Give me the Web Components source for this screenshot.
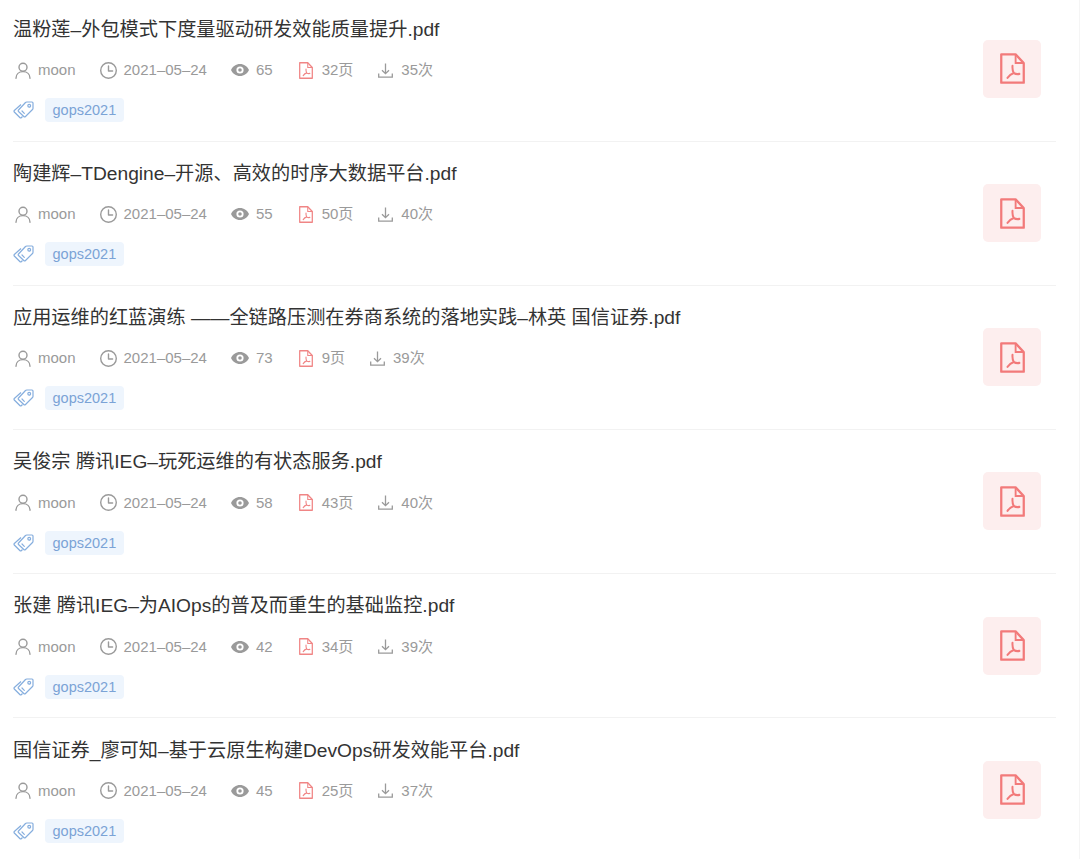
<!DOCTYPE html>
<html><head><meta charset="utf-8"><style>
html,body{margin:0;padding:0;background:#fff;overflow:hidden}
body{font-family:"Liberation Sans","Noto Sans CJK SC",sans-serif;height:859px;width:1079px;border-right:1px solid #f5f5f5}
doc-list{margin:-2.700px 0 0 13px;width:1043px}
</style></head><body>
<doc-list>
<doc-row name="温粉莲–外包模式下度量驱动研发效能质量提升.pdf" views="65" pages="32页" downloads="35次"></doc-row>
<doc-row name="陶建辉–TDengine–开源、高效的时序大数据平台.pdf" views="55" pages="50页" downloads="40次"></doc-row>
<doc-row name="应用运维的红蓝演练 ——全链路压测在券商系统的落地实践–林英 国信证券.pdf" views="73" pages="9页" downloads="39次"></doc-row>
<doc-row name="吴俊宗 腾讯IEG–玩死运维的有状态服务.pdf" views="58" pages="43页" downloads="40次"></doc-row>
<doc-row name="张建 腾讯IEG–为AIOps的普及而重生的基础监控.pdf" views="42" pages="34页" downloads="39次"></doc-row>
<doc-row name="国信证券_廖可知–基于云原生构建DevOps研发效能平台.pdf" views="45" pages="25页" downloads="37次"></doc-row>
</doc-list>
<script>
const PDF=`<path d="M1 1H12.5L19 7.5V22H1Z" fill="none" stroke="currentColor" stroke-width="1.8" stroke-linejoin="round"/><path d="M12.5 1V7.5H19" fill="none" stroke="currentColor" stroke-width="1.5"/><path d="M10 9.5C9.8 12 10.2 13.5 11 14.8M11 14.8C12.2 15.5 13.8 15.8 15.5 15.5M11 14.8C9.4 15.3 7.5 16.4 6 18.4" fill="none" stroke="currentColor" stroke-width="1.6" stroke-linecap="round"/>`;
const ICONS={
user:`<svg slot="icon" width="16" height="17" viewBox="0 0 16 17" fill="none" stroke="#9a9a9a" stroke-width="1.4"><circle cx="8" cy="5.2" r="4"/><path d="M1 16.2C1 12.2 4 9.600 8 9.600S15 12.2 15 16.2" stroke-linecap="round"/></svg>`,
clock:`<svg slot="icon" width="17" height="17" viewBox="0 0 17 17" fill="none" stroke="#9a9a9a" stroke-width="1.4"><circle cx="8.500" cy="8.500" r="7.800"/><path d="M8.500 4V9H12.600" stroke-linecap="round" stroke-linejoin="round"/></svg>`,
eye:`<svg slot="icon" width="18" height="12" viewBox="0 0 18 12"><path fill="#9a9a9a" fill-rule="evenodd" d="M9 0C13 0 16.400 2.500 18 6C16.400 9.500 13 12 9 12S1.600 9.500 0 6C1.600 2.500 5 0 9 0ZM9 2.400A3.600 3.600 0 1 0 9 9.600A3.600 3.600 0 1 0 9 2.400ZM9 4.200A1.800 1.800 0 1 1 9 7.800A1.800 1.800 0 1 1 9 4.200Z"/></svg>`,
pdf:`<svg slot="icon" width="14" height="17" viewBox="0 0 20 23" preserveAspectRatio="none" style="color:#f08585">${PDF}</svg>`,
down:`<svg slot="icon" width="15" height="15" viewBox="0 0 15 15" fill="none" stroke="#9a9a9a" stroke-width="1.3"><path d="M7.500 .5V10.500M4 7.200L7.500 10.700L11 7.200M.7 10.500V14.200H14.300V10.500"/></svg>`
};
class DocMeta extends HTMLElement{
 constructor(){super();this.attachShadow({mode:'open'}).innerHTML=`<style>:host{display:inline-flex;align-items:center;gap:var(--g,8px);font-size:15px;line-height:20px;color:#9a9a9a;white-space:nowrap}
 ::slotted(svg){display:block;flex:none}</style><slot name="icon"></slot><slot></slot>`}
}
customElements.define('doc-meta',DocMeta);
class DocTag extends HTMLElement{
 constructor(){super();this.attachShadow({mode:'open'}).innerHTML=`<style>:host{display:inline-block;height:24px;line-height:24px;padding:0 7.500px;border-radius:4px;background:#eef5fd;color:#7ba3d6;font-size:14.500px}</style><slot></slot>`}
}
customElements.define('doc-tag',DocTag);
class DocThumb extends HTMLElement{
 constructor(){super();this.attachShadow({mode:'open'}).innerHTML=`<style>:host{display:flex;align-items:center;justify-content:center;width:58px;height:58px;border-radius:5px;background:#fdeeee;color:#f27a7a}svg{display:block}</style>
 <svg width="25" height="31" viewBox="0 0 20 23" preserveAspectRatio="none">${PDF}</svg>`}
}
customElements.define('doc-thumb',DocThumb);
class DocRow extends HTMLElement{
 constructor(){super();this.attachShadow({mode:'open'}).innerHTML=`<style>
 :host{display:flex;box-sizing:border-box;height:144.200px;border-bottom:1px solid #f2f2f2;padding-right:15px;justify-content:space-between;align-items:center}
 .main{display:flex;flex-direction:column;padding-top:1.800px}
 .title{font-size:19.200px;line-height:24px;color:#333;height:24px;white-space:pre}
 .metas{display:flex;align-items:center;gap:24px;margin:16.400px 0 0 2px;height:24px}
 .tags{display:flex;align-items:center;gap:11px;margin-top:15.900px}
 .tags svg{display:block}
 .pg{margin-left:2px}.dl{margin-left:1px}
 </style>
 <div class="main"><div class="title"></div>
 <div class="metas">
 <doc-meta style="--g:7px">${ICONS.user}moon</doc-meta>
 <doc-meta style="--g:7px">${ICONS.clock}2021–05–24</doc-meta>
 <doc-meta style="--g:7px">${ICONS.eye}<span class="v"></span></doc-meta>
 <doc-meta class="pg" style="--g:9px">${ICONS.pdf}<span class="p"></span></doc-meta>
 <doc-meta class="dl">${ICONS.down}<span class="d"></span></doc-meta>
 </div>
 <div class="tags"><svg width="21" height="18" viewBox="0 0 21 18" fill="none" stroke="#86aede" stroke-width="1.200" stroke-linejoin="round"><path d="M5.500 9L12.500 1.500C12.900 1.100 13.300 1 13.800 1H19C19.600 1 20 1.400 20 2V7.300C20 7.800 19.800 8.200 19.500 8.500L12.500 15.500C12 16 11.300 16 10.800 15.500L5.500 10.500C5.100 10.100 5.100 9.400 5.500 9Z"/><path d="M8 3.500L1.300 9.500C.9 9.900 .9 10.600 1.300 11L6.800 16.500C7.300 17 8 17 8.500 16.500L9.500 15.500"/><circle cx="16.200" cy="4.800" r="1.400"/><path d="M9 10L11.300 12.300" stroke-linecap="round"/></svg><doc-tag>gops2021</doc-tag></div></div>
 <doc-thumb></doc-thumb>`}
 connectedCallback(){const s=this.shadowRoot;
  s.querySelector('.title').textContent=this.getAttribute('name');
  s.querySelector('.v').textContent=this.getAttribute('views');
  s.querySelector('.p').textContent=this.getAttribute('pages');
  s.querySelector('.d').textContent=this.getAttribute('downloads');}
}
customElements.define('doc-row',DocRow);
class DocList extends HTMLElement{
 constructor(){super();this.attachShadow({mode:'open'}).innerHTML=`<style>:host{display:block}</style><slot></slot>`}
}
customElements.define('doc-list',DocList);
</script>
</body></html>
